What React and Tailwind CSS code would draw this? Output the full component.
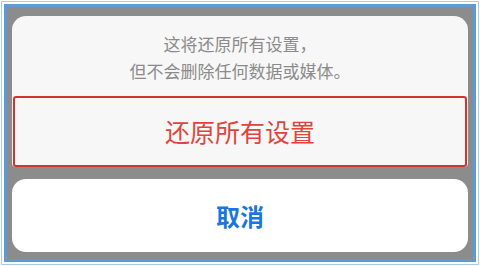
import React from "react";

const font = { fontFamily: '"Noto Sans CJK SC", "Noto Sans", sans-serif' };

const App = () => {
  return (
    <div className="w-[480px] h-[266px] bg-white p-px" style={font}>
      <div className="w-full h-full border border-[#a9cde9] p-[2px]">
        <div className="w-full h-full border-[3px] border-[#5d9bd6] bg-[#8c8c8c] px-[5px] pt-[9px] pb-[4px] flex flex-col gap-[12px]">
          <div className="bg-[#f7f7f7] rounded-t-[14px] rounded-b-[4px] flex flex-col">
            <div className="h-[80px] flex flex-col items-center justify-center text-[17px] leading-[27px] text-[#8b8b8b] pt-[2px]">
              <p>这将还原所有设置，</p>
              <p>但不会删除任何数据或媒体。</p>
            </div>
            <button className="h-[71px] mx-px border-2 border-[#d2332f] rounded-[3px] bg-[#f7f7f7] text-[25px] text-[#e0443c] flex items-center justify-center">
              还原所有设置
            </button>
          </div>
          <button className="h-[73px] bg-white rounded-[14px] text-[24px] font-bold text-[#1976e0] flex items-center justify-center">
            取消
          </button>
        </div>
      </div>
    </div>
  );
};

export default App;
